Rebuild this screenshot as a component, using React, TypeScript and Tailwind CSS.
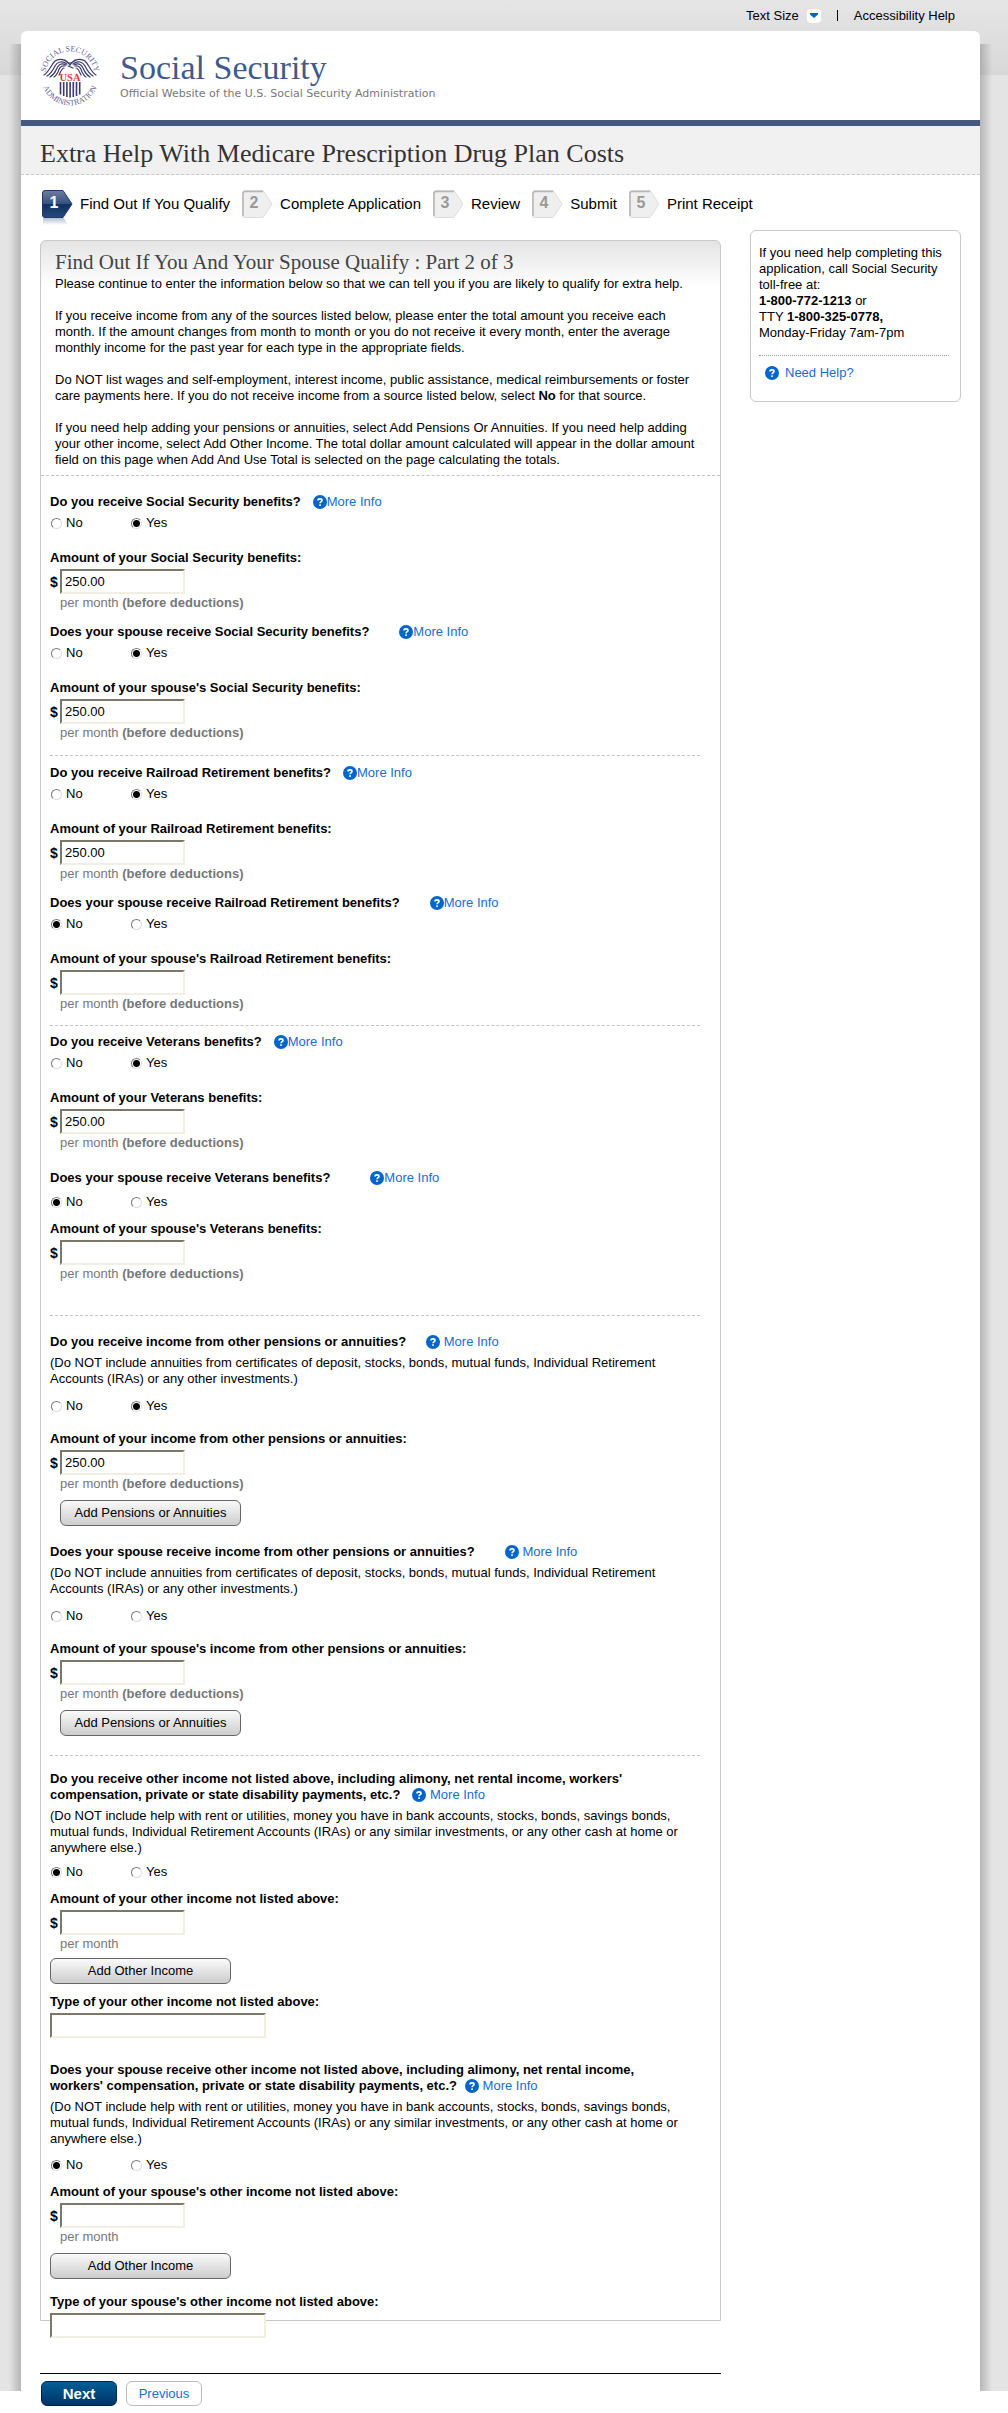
import { useState } from "react"
import type { ReactNode } from "react"

const steps = ["Find Out If You Qualify", "Complete Application", "Review", "Submit", "Print Receipt"]

function Seal() {
    return (
        <svg viewBox="0 0 62 62" className="h-[62px] w-[62px] shrink-0 overflow-visible" role="img" aria-label="Social Security Administration">
            <defs>
                <path id="seal-top" d="M6.800 36 A24.700 24.700 0 1 1 55.200 36" />
                <path id="seal-bottom" d="M2.500 26 A29 29 0 1 0 59.500 26" />
            </defs>
            <g fill="#5f5f8f" fontFamily="'Liberation Serif', serif" fontSize="8">
                <text textAnchor="middle"><textPath href="#seal-top" startOffset="50%">SOCIAL SECURITY</textPath></text>
                <text textAnchor="middle"><textPath href="#seal-bottom" startOffset="50%">ADMINISTRATION</textPath></text>
            </g>
            <g fill="none" stroke="#3b3b6d" strokeWidth="1.2" strokeLinecap="round">
                <path d="M31 20 C27 14 20 13 16 16 C12 20 10 27 5 30" />
                <path d="M28 19 C23 15 18 17 16 21 C14 25 12 29 8 31" />
                <path d="M27 20 C22 17 19 20 17 25 C16 28 14 30 11 32" />
                <path d="M26 21 C22 20 20 23 19 27 C18 29 17 31 15 32" />
                <path d="M25 23 C23 23 22 26 20 30" />
                <path d="M31 20 C35 14 42 13 46 16 C50 20 52 27 57 30" />
                <path d="M34 19 C39 15 44 17 46 21 C48 25 50 29 54 31" />
                <path d="M35 20 C40 17 43 20 45 25 C46 28 48 30 51 32" />
                <path d="M36 21 C40 20 42 23 43 27 C44 29 45 31 47 32" />
                <path d="M37 23 C39 23 40 26 42 30" />
                <path d="M26 15 C29 19 33 19 36 15 M29 21 L34 23" />
            </g>
            <text x="31" y="35.500" textAnchor="middle" fill="#e03a3a" fontFamily="'Liberation Serif', serif" fontSize="10.500" fontWeight="bold">USA</text>
            <path d="M21.500 37 V49.500 M24.700 37 V51 M27.900 37 V52 M31.100 37 V52.500 M34.300 37 V52 M37.500 37 V51 M40.700 37 V49.500" stroke="#3b3b6d" strokeWidth="1.600" />
        </svg>
    )
}

function HelpIcon() {
    return (
        <svg viewBox="0 0 14 14" className="inline-block h-[14px] w-[14px] shrink-0 align-[-3px]" aria-hidden="true">
            <circle cx="7" cy="7" r="7" fill="#0066cc" />
            <path d="M5 5.400 C5 3.300 9 3.300 9 5.400 C9 6.700 7.100 6.600 7.100 8.300" fill="none" stroke="#fff" strokeWidth="1.600" />
            <rect x="6.200" y="9.300" width="1.700" height="1.600" fill="#fff" />
        </svg>
    )
}

function StepMarker({ number, active }: { number: number; active: boolean }) {
    return (
        <svg viewBox="0 0 31 36" className="h-[36px] w-[31px] shrink-0" aria-hidden="true">
            <defs>
                <linearGradient id="step-on" x1="0" y1="0" x2="0" y2="1">
                    <stop offset="0" stopColor="#6f7da0" />
                    <stop offset="0.5" stopColor="#33507f" />
                    <stop offset="0.52" stopColor="#0f2f62" />
                    <stop offset="1" stopColor="#274a7d" />
                </linearGradient>
                <linearGradient id="step-glow" x1="0" y1="0" x2="0" y2="1">
                    <stop offset="0" stopColor="#b4bfd0" />
                    <stop offset="1" stopColor="#ffffff" />
                </linearGradient>
            </defs>
            {active && <path d="M1 28 H22 L26 35 H1 Z" fill="url(#step-glow)" />}
            <path d="M3 0.500 H21 L30 14 L21 27.500 H3 Q0.500 27.500 0.500 25 V3 Q0.500 0.500 3 0.500 Z" fill={active ? "url(#step-on)" : "#efefef"} stroke={active ? "#1d3a6b" : "#dcdcdc"} />
            {!active && <path d="M1 26 V3.500 Q1 1.500 3.500 1.500 H21" fill="none" stroke="#b5b5b5" strokeWidth="1.500" />}
            <text x="12" y="18" textAnchor="middle" fontFamily="'Liberation Sans', sans-serif" fontSize="16" fontWeight="bold" fill={active ? "#ffffff" : "#999999"}>{number}</text>
        </svg>
    )
}

function MoreInfo({ spaced = false }: { spaced?: boolean }) {
    return (
        <a href="#more-info" className="whitespace-nowrap font-normal text-[#1a6bd0]">
            <HelpIcon />{spaced ? " " : ""}More Info
        </a>
    )
}

type QuestionProps = {
    id: string
    title: string
    info: string
    spaced?: boolean
    note?: string
    answer?: "no" | "yes"
    radioGap: string
    children: ReactNode
}

function Question({ id, title, info, spaced, note, answer, radioGap, children }: QuestionProps) {
    const [value, setValue] = useState(answer)
    return (
        <fieldset>
            <legend className="pr-5 font-bold">
                {title}
                <span className={info}><MoreInfo spaced={spaced} /></span>
            </legend>
            {note && <p className="mt-[5px]">{note}</p>}
            <div className={`flex ${radioGap}`}>
                {(["no", "yes"] as const).map((option) => (
                    <label key={option} className="flex w-20 items-center gap-1 pl-px">
                        <input
                            type="radio"
                            name={id}
                            checked={value === option}
                            onChange={() => setValue(option)}
                            className="h-[11px] w-[11px] appearance-none rounded-full border border-t-[#777] border-r-[#ddd] border-b-[#ddd] border-l-[#777] bg-white checked:bg-[radial-gradient(circle,#000_3px,transparent_4px)]"
                        />
                        {option === "no" ? "No" : "Yes"}
                    </label>
                ))}
            </div>
            {children}
        </fieldset>
    )
}

const boxStyle = "block h-[25px] border-2 border-t-[#7c7868] border-l-[#7c7868] border-r-[#f1efe2] border-b-[#f1efe2] bg-white px-[3px]"

function Amount({ id, label, value, gap, deductions = true }: { id: string; label: string; value?: string; gap: string; deductions?: boolean }) {
    return (
        <div className={gap}>
            <label htmlFor={id} className="block font-bold">{label}</label>
            <div className="mt-[3px] flex items-center">
                <span className="w-[10px] text-sm font-bold">$</span>
                <input id={id} type="text" defaultValue={value} className={`${boxStyle} w-[125px]`} />
            </div>
            <p className="mt-px pl-[10px] text-[#777]">
                per month {deductions && <b>(before deductions)</b>}
            </p>
        </div>
    )
}

function IncomeType({ id, label, gap }: { id: string; label: string; gap: string }) {
    return (
        <div className={gap}>
            <label htmlFor={id} className="block font-bold">{label}</label>
            <input id={id} type="text" className={`${boxStyle} mt-[3px] w-[216px]`} />
        </div>
    )
}

function AddButton({ children, className }: { children: ReactNode; className: string }) {
    return (
        <button type="button" className={`block h-[26px] w-[181px] rounded-md border border-[#666] bg-linear-to-b from-[#fafafa] to-[#cdcdcd] ${className}`}>
            {children}
        </button>
    )
}

const pensionNote = "(Do NOT include annuities from certificates of deposit, stocks, bonds, mutual funds, Individual Retirement Accounts (IRAs) or any other investments.)"
const otherNote = "(Do NOT include help with rent or utilities, money you have in bank accounts, stocks, bonds, savings bonds, mutual funds, Individual Retirement Accounts (IRAs) or any similar investments, or any other cash at home or anywhere else.)"

function Divider({ className }: { className: string }) {
    return <hr className={`border-t border-dashed border-[#c4c4c4] ${className}`} />
}

// The last field hangs over the bottom edge of the panel.
function IncomeForm() {
    return (
        <div className="mr-5 mb-[-18px] ml-[9px] pt-[18px]">
            <Question id="ss" title="Do you receive Social Security benefits?" info="ml-3" answer="yes" radioGap="mt-[5px]">
                <Amount id="ss-amount" label="Amount of your Social Security benefits:" value="250.00" gap="mt-[19px]" />
            </Question>
            <div className="mt-[13px]">
                <Question id="ss-spouse" title="Does your spouse receive Social Security benefits?" info="ml-[30px]" answer="yes" radioGap="mt-[5px]">
                    <Amount id="ss-spouse-amount" label="Amount of your spouse's Social Security benefits:" value="250.00" gap="mt-[19px]" />
                </Question>
            </div>
            <Divider className="mt-[14px] mb-[9px]" />

            <Question id="rr" title="Do you receive Railroad Retirement benefits?" info="ml-3" answer="yes" radioGap="mt-[5px]">
                <Amount id="rr-amount" label="Amount of your Railroad Retirement benefits:" value="250.00" gap="mt-[19px]" />
            </Question>
            <div className="mt-[13px]">
                <Question id="rr-spouse" title="Does your spouse receive Railroad Retirement benefits?" info="ml-[30px]" answer="no" radioGap="mt-[5px]">
                    <Amount id="rr-spouse-amount" label="Amount of your spouse's Railroad Retirement benefits:" gap="mt-[19px]" />
                </Question>
            </div>
            <Divider className="mt-[13px] mb-[8px]" />

            <Question id="va" title="Do you receive Veterans benefits?" info="ml-3" answer="yes" radioGap="mt-[5px]">
                <Amount id="va-amount" label="Amount of your Veterans benefits:" value="250.00" gap="mt-[19px]" />
            </Question>
            <div className="mt-[19px]">
                <Question id="va-spouse" title="Does your spouse receive Veterans benefits?" info="ml-10" answer="no" radioGap="mt-[8px]">
                    <Amount id="va-spouse-amount" label="Amount of your spouse's Veterans benefits:" gap="mt-[11px]" />
                </Question>
            </div>
            <Divider className="mt-[33px] mb-[18px]" />

            <Question id="pension" title="Do you receive income from other pensions or annuities?" info="ml-5" spaced note={pensionNote} answer="yes" radioGap="mt-[11px]">
                <Amount id="pension-amount" label="Amount of your income from other pensions or annuities:" value="250.00" gap="mt-[17px]" />
                <AddButton className="mt-2 ml-[10px]">Add Pensions or Annuities</AddButton>
            </Question>
            <div className="mt-[18px]">
                <Question id="pension-spouse" title="Does your spouse receive income from other pensions or annuities?" info="ml-[30px]" spaced note={pensionNote} radioGap="mt-[11px]">
                    <Amount id="pension-spouse-amount" label="Amount of your spouse's income from other pensions or annuities:" gap="mt-[17px]" />
                    <AddButton className="mt-2 ml-[10px]">Add Pensions or Annuities</AddButton>
                </Question>
            </div>
            <Divider className="mt-[19px] mb-[15px]" />

            <Question id="other" title="Do you receive other income not listed above, including alimony, net rental income, workers' compensation, private or state disability payments, etc.?" info="ml-3" spaced note={otherNote} answer="no" radioGap="mt-[8px]">
                <Amount id="other-amount" label="Amount of your other income not listed above:" deductions={false} gap="mt-[11px]" />
                <AddButton className="mt-1.5">Add Other Income</AddButton>
                <IncomeType id="other-type" label="Type of your other income not listed above:" gap="mt-[10px]" />
            </Question>
            <div className="mt-[24px]">
                <Question id="other-spouse" title="Does your spouse receive other income not listed above, including alimony, net rental income, workers' compensation, private or state disability payments, etc.?" info="ml-2" spaced note={otherNote} answer="no" radioGap="mt-[10px]">
                    <Amount id="other-spouse-amount" label="Amount of your spouse's other income not listed above:" deductions={false} gap="mt-[11px]" />
                    <AddButton className="mt-2">Add Other Income</AddButton>
                    <IncomeType id="other-spouse-type" label="Type of your spouse's other income not listed above:" gap="mt-[15px]" />
                </Question>
            </div>
        </div>
    )
}

function App() {
    return (
        <div className="bg-white pb-[22px] font-['Liberation_Sans',Arial,sans-serif] text-[13px] leading-4 text-black">
            <div className="bg-[linear-gradient(#e5e5e5,#d8d8d8_75px,#e4e4e4_75px)]">
                <nav className="flex h-[31px] items-center justify-end pr-[53px]">
                    <button type="button" className="flex items-center gap-2">
                        Text Size
                        <span className="flex h-[14px] w-[14px] items-center justify-center rounded-sm bg-white">
                            <svg viewBox="0 0 8 5" className="h-[5px] w-2" aria-hidden="true"><path d="M0 0 H8 V1.500 L4 5 L0 1.500 Z" fill="#0066cc" /></svg>
                        </span>
                    </button>
                    <span className="mx-4 h-[11px] w-px bg-black" />
                    <a href="#accessibility">Accessibility Help</a>
                </nav>

                <div className="flex">
                    <div className="mt-[13px] w-[21px] shrink-0 bg-[linear-gradient(to_left,rgba(0,0,0,0.2),transparent_12px)]" />
                    <div className="min-w-0 flex-1 rounded-t-md bg-white">
                        <header className="flex h-[89px] items-center pl-[18px]">
                            <Seal />
                            <div className="ml-[19px]">
                                <p className="font-['Liberation_Serif',serif] text-[34px] leading-9 text-[#3f5a8a]">Social Security</p>
                                <p className="font-['DejaVu_Sans',sans-serif] text-[11px] leading-4 text-[#777]">Official Website of the U.S. Social Security Administration</p>
                            </div>
                        </header>
                        <div className="border-t-[6px] border-b border-t-[#455880] border-b-[#c8c8c8] bg-[#f1f1f1] [border-bottom-style:dashed]">
                            <h1 className="px-[19px] pt-[14px] pb-[6px] font-['Liberation_Serif',serif] text-[26px] leading-7 text-[#333]">Extra Help With Medicare Prescription Drug Plan Costs</h1>
                        </div>

                        <ol className="flex gap-3 px-[21px] pt-[15px] text-[15px]">
                            {steps.map((step, index) => (
                                <li key={step} className="flex gap-[7px] leading-7">
                                    <StepMarker number={index + 1} active={index === 0} />
                                    {step}
                                </li>
                            ))}
                        </ol>

                        <div className="flex items-start gap-[29px] px-[19px] pt-1">
                            <main className="min-w-0 flex-1 pt-[10px]">
                                <section className="rounded-t-md border border-[#c8c8c8] bg-[linear-gradient(#e4e4e4,#fff_46px)]">
                                    <div className="border-b border-dashed border-[#c4c4c4] px-[14px] pt-[9px] pb-[7px]">
                                        <h2 className="mb-0.5 font-['Liberation_Serif',serif] text-[21px] leading-6 text-[#444]">Find Out If You And Your Spouse Qualify : Part 2 of 3</h2>
                                        <div className="flex flex-col gap-4">
                                            <p>Please continue to enter the information below so that we can tell you if you are likely to qualify for extra help.</p>
                                            <p>If you receive income from any of the sources listed below, please enter the total amount you receive each month. If the amount changes from month to month or you do not receive it every month, enter the average monthly income for the past year for each type in the appropriate fields.</p>
                                            <p>Do NOT list wages and self-employment, interest income, public assistance, medical reimbursements or foster care payments here. If you do not receive income from a source listed below, select <b>No</b> for that source.</p>
                                            <p>If you need help adding your pensions or annuities, select Add Pensions Or Annuities. If you need help adding your other income, select Add Other Income. The total dollar amount calculated will appear in the dollar amount field on this page when Add And Use Total is selected on the page calculating the totals.</p>
                                        </div>
                                    </div>
                                    <IncomeForm />
                                </section>
                                <div className="mt-[52px] mb-[-15px] flex gap-[9px] border-t border-black px-px pt-[7px]">
                                    <button type="submit" className="h-[25px] w-[76px] rounded-md border border-[#002255] bg-linear-to-b from-[#005f96] to-[#003366] text-[15px] font-bold text-white">Next</button>
                                    <button type="button" className="h-[25px] w-[76px] rounded-md border border-[#bbb] bg-white text-[#1a6bd0]">Previous</button>
                                </div>
                            </main>

                            <aside className="w-[211px] shrink-0 rounded-md border border-[#c8c8c8] px-2 pt-[14px] pb-5">
                                <p>If you need help completing this application, call Social Security toll-free at:</p>
                                <p><b>1-800-772-1213</b> or</p>
                                <p>TTY <b>1-800-325-0778,</b></p>
                                <p>Monday-Friday 7am-7pm</p>
                                <hr className="mt-[14px] mr-[3px] mb-[9px] border-t border-dotted border-[#999]" />
                                <a href="#help" className="ml-1.5 flex items-center gap-1.5 text-[#1a6bd0]"><HelpIcon />Need Help?</a>
                            </aside>
                        </div>
                    </div>
                    <div className="mt-[13px] w-7 shrink-0 bg-[linear-gradient(to_right,rgba(0,0,0,0.2),transparent_12px)]" />
                </div>
            </div>
        </div>
    )
}

export default App
